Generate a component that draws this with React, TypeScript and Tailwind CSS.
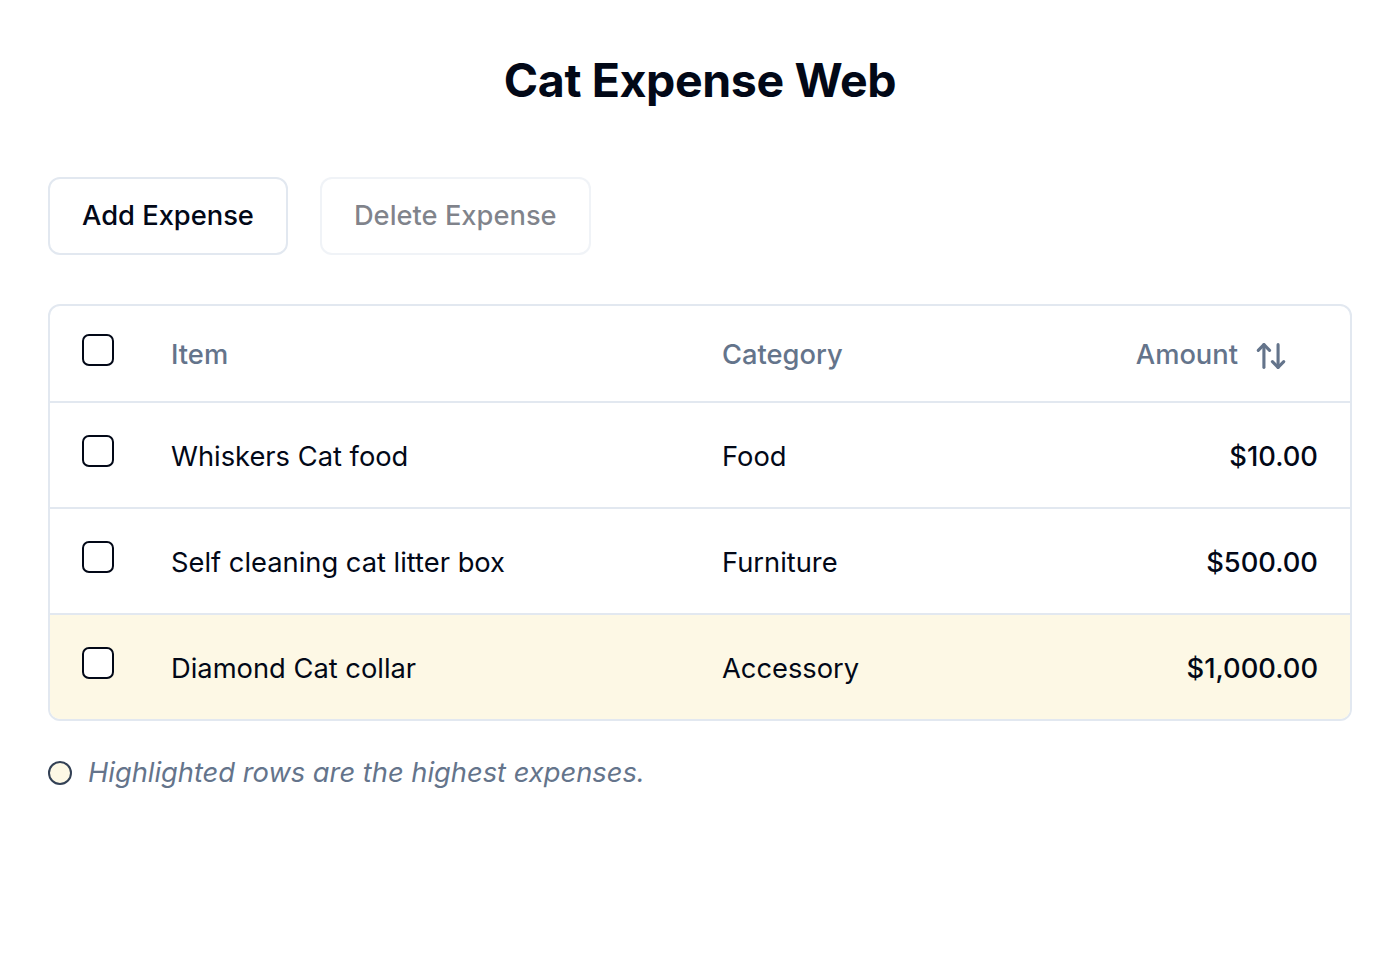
import { ArrowUpDown } from 'lucide-react'

interface Expense {
  id: number
  item: string
  category: string
  amount: string
  highlight?: boolean
}

const expenses: Expense[] = [
  { id: 1, item: 'Whiskers Cat food', category: 'Food', amount: '$10.00' },
  { id: 2, item: 'Self cleaning cat litter box', category: 'Furniture', amount: '$500.00' },
  { id: 3, item: 'Diamond Cat collar', category: 'Accessory', amount: '$1,000.00', highlight: true },
]

function Checkbox() {
  return <div className="w-8 h-8 shrink-0 rounded-[7px] border-2 border-[#020817] bg-white" />
}

export default function App() {
  return (
    <div className="min-h-screen bg-white px-12 pt-12 font-['Inter',sans-serif] text-[#020817]">
      <h1 className="text-center text-[46.5px] leading-[64px] font-bold tracking-[-0.4px]">Cat Expense Web</h1>

      <div className="mt-[65px] flex gap-8">
        <button className="h-[78px] px-[32px] rounded-xl border-2 border-[#e2e8f0] bg-white text-[27.3px] font-medium">
          Add Expense
        </button>
        <button className="h-[78px] px-[32px] rounded-xl border-2 border-[#e2e8f0]/50 bg-white text-[27.3px] font-medium text-[#020817]/50">
          Delete Expense
        </button>
      </div>

      <div className="mt-[49px] rounded-xl border-2 border-[#e2e8f0] overflow-hidden">
        <div className="flex items-center h-[95px] px-8 text-[27.3px] font-medium text-[#64748b]">
          <div className="w-[89px] -mt-2">
            <Checkbox />
          </div>
          <div className="w-[551px] pt-1">Item</div>
          <div className="flex-1 pt-1">Category</div>
          <div className="flex items-center gap-4 mr-[30px] pt-1">
            <span>Amount</span>
            <ArrowUpDown size={34} strokeWidth={2.2} />
          </div>
        </div>
        {expenses.map((e) => (
          <div
            key={e.id}
            className={`flex items-center h-[106px] px-8 border-t-2 border-[#e2e8f0] text-[27.3px] ${
              e.highlight ? 'bg-[#fdf8e5]' : 'bg-white'
            }`}
          >
            <div className="w-[89px] -mt-2">
              <Checkbox />
            </div>
            <div className="w-[551px] pt-1">{e.item}</div>
            <div className="flex-1 pt-1">{e.category}</div>
            <div className="font-medium pt-1">{e.amount}</div>
          </div>
        ))}
      </div>

      <div className="mt-[32px] flex items-center gap-4">
        <div className="w-6 h-6 rounded-full border-2 border-[#334155] bg-[#fdf8e5]" />
        <p className="italic text-[27.3px] text-[#64748b]">Highlighted rows are the highest expenses.</p>
      </div>
    </div>
  )
}
